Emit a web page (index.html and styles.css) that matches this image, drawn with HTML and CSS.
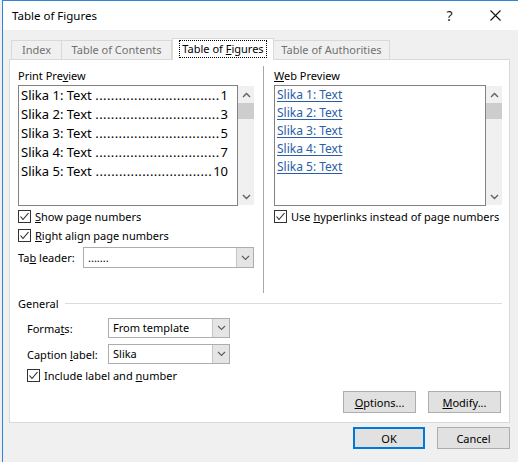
FILE: index.html
```html
<!DOCTYPE html>
<html>
<head>
<meta charset="utf-8">
<title>Table of Figures</title>
<link rel="stylesheet" href="styles.css">
</head>
<body>
<div class="win">
  <div class="titlebar">
    <div class="title">Table of Figures</div>
    <div class="capbtn help">?</div>
    <div class="capbtn close"><svg width="11" height="11" viewBox="0 0 11 11"><path d="M0.5 0.5L10.5 10.5M10.5 0.5L0.5 10.5" stroke="#111" stroke-width="1.1" fill="none"/></svg></div>
  </div>
  <div class="main">
    <div class="tabs">
      <div class="tab t-index">Index</div>
      <div class="tab t-contents">Table of Contents</div>
      <div class="tab active t-figures"><span class="focus">Table of <u>F</u>igures</span></div>
      <div class="tab t-auth">Table of Authorities</div>
    </div>
    <div class="panel">
      <div class="cols">
        <div class="col col-left">
          <div class="label">Print Pre<u>v</u>iew</div>
          <div class="preview">
            <div class="list print">
              <div class="entry"><span>Slika 1: Text</span><span class="leader">................................</span><span class="num">1</span></div>
              <div class="entry"><span>Slika 2: Text</span><span class="leader">................................</span><span class="num">3</span></div>
              <div class="entry"><span>Slika 3: Text</span><span class="leader">................................</span><span class="num">5</span></div>
              <div class="entry"><span>Slika 4: Text</span><span class="leader">................................</span><span class="num">7</span></div>
              <div class="entry"><span>Slika 5: Text</span><span class="leader">..............................</span><span class="num">10</span></div>
            </div>
            <div class="scroll">
              <div class="sb-btn"><svg width="9" height="6" viewBox="0 0 9 6"><path d="M1 5L4.5 1.5L8 5" stroke="#606060" stroke-width="1.4" fill="none"/></svg></div>
              <div class="thumb"></div>
              <div class="sb-space"></div>
              <div class="sb-btn"><svg width="9" height="6" viewBox="0 0 9 6"><path d="M1 1L4.5 4.5L8 1" stroke="#606060" stroke-width="1.4" fill="none"/></svg></div>
            </div>
          </div>
          <div class="check first"><span class="box"><svg width="11" height="11" viewBox="0 0 11 11"><path d="M1.5 5.5L4 8.5L9.5 2" stroke="#222" stroke-width="1.1" fill="none"/></svg></span><span><u>S</u>how page numbers</span></div>
          <div class="check"><span class="box"><svg width="11" height="11" viewBox="0 0 11 11"><path d="M1.5 5.5L4 8.5L9.5 2" stroke="#222" stroke-width="1.1" fill="none"/></svg></span><span><u>R</u>ight align page numbers</span></div>
          <div class="field">
            <span class="flabel">Ta<u>b</u> leader:</span>
            <div class="select leader-sel"><span class="val">.......</span><span class="arrow"><svg width="9" height="6" viewBox="0 0 9 6"><path d="M1 1L4.5 4.5L8 1" stroke="#606060" stroke-width="1.2" fill="none"/></svg></span></div>
          </div>
        </div>
        <div class="divider"></div>
        <div class="col col-right">
          <div class="label"><u>W</u>eb Preview</div>
          <div class="preview">
            <div class="list web">
              <div class="link">Slika 1: Text</div>
              <div class="link">Slika 2: Text</div>
              <div class="link">Slika 3: Text</div>
              <div class="link">Slika 4: Text</div>
              <div class="link">Slika 5: Text</div>
            </div>
            <div class="scroll">
              <div class="sb-btn"><svg width="9" height="6" viewBox="0 0 9 6"><path d="M1 5L4.5 1.5L8 5" stroke="#606060" stroke-width="1.4" fill="none"/></svg></div>
              <div class="thumb"></div>
              <div class="sb-space"></div>
              <div class="sb-btn"><svg width="9" height="6" viewBox="0 0 9 6"><path d="M1 1L4.5 4.5L8 1" stroke="#606060" stroke-width="1.4" fill="none"/></svg></div>
            </div>
          </div>
          <div class="check first"><span class="box"><svg width="11" height="11" viewBox="0 0 11 11"><path d="M1.5 5.5L4 8.5L9.5 2" stroke="#222" stroke-width="1.1" fill="none"/></svg></span><span>Use <u>h</u>yperlinks instead of page numbers</span></div>
        </div>
      </div>
      <div class="general">
        <div class="group-head"><span>General</span><span class="rule"></span></div>
        <div class="grow">
          <span class="glabel">Forma<u>t</u>s:</span>
          <div class="select gsel"><span class="val">From template</span><span class="arrow"><svg width="9" height="6" viewBox="0 0 9 6"><path d="M1 1L4.5 4.5L8 1" stroke="#606060" stroke-width="1.2" fill="none"/></svg></span></div>
        </div>
        <div class="grow">
          <span class="glabel">Caption <u>l</u>abel:</span>
          <div class="select gsel"><span class="val">Slika</span><span class="arrow"><svg width="9" height="6" viewBox="0 0 9 6"><path d="M1 1L4.5 4.5L8 1" stroke="#606060" stroke-width="1.2" fill="none"/></svg></span></div>
        </div>
        <div class="check gcheck"><span class="box"><svg width="11" height="11" viewBox="0 0 11 11"><path d="M1.5 5.5L4 8.5L9.5 2" stroke="#222" stroke-width="1.1" fill="none"/></svg></span><span>Include label and <u>n</u>umber</span></div>
      </div>
      <div class="btnrow">
        <button class="btn"><u>O</u>ptions...</button>
        <button class="btn"><u>M</u>odify...</button>
      </div>
    </div>
    <div class="footer">
      <button class="btn ok">OK</button>
      <button class="btn">Cancel</button>
    </div>
  </div>
</div>
</body>
</html>
```

FILE: styles.css
```css
* { box-sizing: border-box; }
html, body { margin: 0; padding: 0; }
body {
  width: 518px;
  height: 462px;
  overflow: hidden;
  background: #eef1f4;
  font-family: "Noto Sans", "Open Sans", sans-serif;
  font-size: 11px;
  color: #000;
}
u { text-decoration: underline; text-underline-offset: 1px; }

.win {
  margin-left: 2px;
  height: 462px;
  border-left: 1px solid #2f84d6;
  border-top: 1px solid #2f84d6;
  background: #f0f0f0;
  display: flex;
  flex-direction: column;
}

.titlebar {
  height: 29px;
  background: #fff;
  display: flex;
  align-items: center;
  padding-left: 9px;
}
.title { flex: 1; font-size: 11.5px; }
.capbtn {
  height: 29px;
  display: flex;
  align-items: center;
  justify-content: center;
}
.help { width: 45px; font-size: 14px; color: #222; }
.close { width: 46px; }

.main {
  flex: 1;
  display: flex;
  flex-direction: column;
  padding: 8px 8px 0 6px;
}

.tabs {
  display: flex;
  align-items: flex-end;
  height: 21px;
  padding-left: 2px;
  position: relative;
  z-index: 1;
}
.tab {
  height: 19px;
  line-height: 17px;
  text-align: center;
  border: 1px solid #d9d9d9;
  border-bottom: none;
  background: #f0f0f0;
  color: #707070;
  white-space: nowrap;
}
.tab + .tab { border-left: none; }
.t-index { width: 51px; }
.t-contents { width: 110px; }
.t-figures { width: 102px; }
.t-auth { width: 116px; }
.tab.active {
  height: 22px;
  margin-bottom: -1px;
  background: #fff;
  color: #000;
  border-left: 1px solid #d9d9d9;
  line-height: 18px;
}
.focus {
  display: inline-block;
  border: 1px dotted #000;
  line-height: 16px;
  padding: 0 2px;
  margin-top: 1px;
}

.panel {
  background: #fff;
  border: 1px solid #d9d9d9;
  padding: 6px 7px 9px 8px;
  display: flex;
  flex-direction: column;
}

.cols { display: flex; }
.col-left { width: 236px; padding-bottom: 25px; }
.divider { width: 1px; background: #a8a8a8; margin: 0 10px 0 9px; }
.col-right { width: 228px; }

.label { margin-top: 2px; height: 16px; line-height: 16px; }

.preview { display: flex; margin-top: 1px; }
.list {
  flex: 1;
  height: 121px;
  border: 1px solid #828282;
  overflow: hidden;
}
.print {
  font-size: 13px;
  padding: 0 9px 0 2px;
}
.entry {
  display: flex;
  height: 19px;
  line-height: 19px;
  white-space: nowrap;
}
.leader { flex: 1; text-align: right; letter-spacing: 0.4px; padding-right: 1px; }

.web { font-size: 12px; padding: 0 2px; }
.link {
  height: 18px;
  line-height: 18px;
  color: #2a5ea8;
  text-decoration: underline;
  text-underline-offset: 2px;
}

.scroll {
  width: 16px;
  margin: 1px 0;
  background: #f0f0f0;
  display: flex;
  flex-direction: column;
}
.sb-btn { height: 17px; display: flex; align-items: center; justify-content: center; }
.thumb { height: 16px; background: #cdcdcd; }
.sb-space { flex: 1; }

.check {
  display: flex;
  align-items: center;
  gap: 4px;
  height: 19px;
  white-space: nowrap;
}
.check.first { margin-top: 1px; }
.box {
  width: 13px;
  height: 13px;
  border: 1px solid #333;
  background: #fff;
  display: flex;
  align-items: center;
  justify-content: center;
}

.field { display: flex; align-items: center; margin-top: 2px; }
.flabel { width: 65px; }

.select {
  height: 21px;
  border: 1px solid #adadad;
  background: #fff;
  display: flex;
  align-items: stretch;
}
.leader-sel { width: 171px; }
.val { flex: 1; padding-left: 4px; line-height: 19px; }
.arrow {
  width: 17px;
  background: #e5e5e5;
  border-left: 1px solid #c4c4c4;
  display: flex;
  align-items: center;
  justify-content: center;
}

.general { margin-top: 3px; }
.group-head { display: flex; align-items: center; height: 16px; line-height: 16px; }
.rule { flex: 1; height: 1px; background: #dcdcdc; margin: 0 0 1px 6px; }
.grow { display: flex; align-items: center; margin-top: 6px; padding-left: 9px; }
.glabel { width: 81px; }
.gsel { width: 122px; height: 20px; }
.gsel .val { line-height: 18px; }
.gcheck { padding-left: 9px; height: 20px; margin-top: 1px; }

.btnrow {
  display: flex;
  justify-content: flex-end;
  gap: 12px;
  margin-top: 6px;
  padding-right: 1px;
}
.btn {
  width: 73px;
  height: 22px;
  padding: 0;
  border: 1px solid #adadad;
  background: #e1e1e1;
  font-family: "Noto Sans", "Open Sans", sans-serif;
  font-size: 11px;
  color: #000;
}

.footer {
  display: flex;
  justify-content: flex-end;
  gap: 12px;
  margin-top: 4px;
}
.btn.ok { width: 72px; border: 2px solid #0078d7; }
```
